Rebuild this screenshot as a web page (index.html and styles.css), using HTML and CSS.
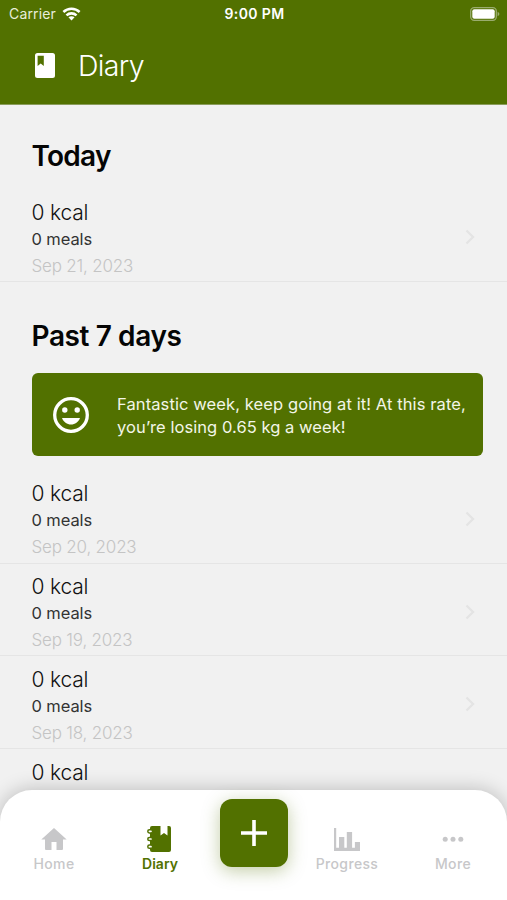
FILE: index.html
```html
<!DOCTYPE html>
<html lang="en">
<head>
<meta charset="utf-8">
<title>Diary</title>
<link rel="stylesheet" href="styles.css">
</head>
<body>
<div class="screen">
  <header class="header">
    <div class="status">
      <div class="carrier"><span class="carrier-name">Carrier</span>
        <svg class="wifi" viewBox="0 0 20 15"><g fill="none" stroke="#fff" stroke-width="2.7"><path d="M1.3 5.4C6.2.8 13.8.8 18.7 5.4"/><path d="M4.6 9C7.7 6.1 12.3 6.1 15.4 9"/></g><path fill="#fff" d="M6.7 11.1c1.9-1.7 4.7-1.7 6.6 0L10 14.4z"/></svg>
      </div>
      <span class="time">9:00 PM</span>
      <svg class="battery" viewBox="0 0 30 14"><rect x=".7" y=".7" width="25.6" height="12.6" rx="3.5" fill="none" stroke="#9aac6e" stroke-width="1.3"/><rect x="2.3" y="2.3" width="22.4" height="9.4" rx="2" fill="#fff"/><path d="M27.6 4.8q1.8 1 1.8 2.2t-1.8 2.2z" fill="#9aac6e"/></svg>
    </div>
    <div class="title-bar">
      <svg class="book" viewBox="0 0 20 25"><path fill="#fff" fill-rule="evenodd" d="M2.5 0h15A2.5 2.5 0 0 1 20 2.5v20a2.5 2.5 0 0 1-2.5 2.5h-15A2.5 2.5 0 0 1 0 22.5v-20A2.5 2.5 0 0 1 2.5 0zM2.600 2.700v10.200l3.100-2.300 3.100 2.300V2.700z"/></svg>
      <h1>Diary</h1>
    </div>
  </header>
  <main class="content">
    <h2 class="today">Today</h2>
    <article class="row"><div><p class="kcal">0 kcal</p><p class="meals">0 meals</p><p class="date">Sep 21, 2023</p></div><svg class="chevron" viewBox="0 0 10 16"><path d="M1.500 1.500 8 8l-6.500 6.500"/></svg></article>
    <h2 class="past">Past 7 days</h2>
    <section class="banner">
      <svg class="smile" viewBox="0 0 36 36"><circle cx="18" cy="18" r="16.300" fill="none" stroke="#fff" stroke-width="3.300"/><circle cx="11.800" cy="13" r="2.700" fill="#fff"/><circle cx="24.200" cy="13" r="2.700" fill="#fff"/><path fill="#fff" d="M9 21h18c-1.500 4-5 6.500-9 6.500S10.500 25 9 21z"/></svg>
      <p><span class="line first">Fantastic week, keep going at it! At this rate,</span> <span class="line second">you’re losing 0.65 kg a week!</span></p>
    </section>
    <article class="row"><div><p class="kcal">0 kcal</p><p class="meals">0 meals</p><p class="date">Sep 20, 2023</p></div><svg class="chevron" viewBox="0 0 10 16"><path d="M1.500 1.500 8 8l-6.500 6.500"/></svg></article>
    <article class="row"><div><p class="kcal">0 kcal</p><p class="meals">0 meals</p><p class="date">Sep 19, 2023</p></div><svg class="chevron" viewBox="0 0 10 16"><path d="M1.500 1.500 8 8l-6.500 6.500"/></svg></article>
    <article class="row"><div><p class="kcal">0 kcal</p><p class="meals">0 meals</p><p class="date">Sep 18, 2023</p></div><svg class="chevron" viewBox="0 0 10 16"><path d="M1.500 1.500 8 8l-6.500 6.500"/></svg></article>
    <article class="row"><div><p class="kcal">0 kcal</p></div></article>
  </main>
  <nav class="tabs">
    <a class="tab"><svg viewBox="0 0 26 26"><path d="M13 2 .3 13.500H4V23q0 1 1 1h5.500v-8h5v8H21q1 0 1-1v-9.500h3.700z"/></svg><span>Home</span></a>
    <a class="tab active"><svg viewBox="0 0 26 26"><path d="M5 0h8.500v9.500l3.500-2.500 3.500 2.500V0H22a2 2 0 0 1 2 2v22a2 2 0 0 1-2 2H5a2 2 0 0 1-2-2V2a2 2 0 0 1 2-2z"/><g fill="#fff" stroke="#527100" stroke-width="1.500"><rect x=".8" y="3.700" width="4.800" height="3.200" rx="1.600"/><rect x=".8" y="11.400" width="4.800" height="3.200" rx="1.600"/><rect x=".8" y="19.100" width="4.800" height="3.200" rx="1.600"/></g></svg><span>Diary</span></a>
    <button class="add" aria-label="Add"><svg viewBox="0 0 26 26"><path d="M13 0v26M0 13h26"/></svg></button>
    <a class="tab progress"><svg viewBox="0 0 26 26"><path d="M0 2h2.200v19.800H5V11h5.300v10.800h2.500V6h5.300v15.800h2.800V16H26v9H0z"/></svg><span>Progress</span></a>
    <a class="tab"><svg viewBox="0 0 26 26"><circle cx="5.200" cy="13.300" r="2.500"/><circle cx="13" cy="13.300" r="2.500"/><circle cx="20.800" cy="13.300" r="2.500"/></svg><span>More</span></a>
  </nav>
</div>
</body>
</html>
```
FILE: styles.css
```css
* { box-sizing: border-box; }
body { margin: 0; font-family: Inter, sans-serif; background: #f1f1f1; }
h1, h2, p { margin: 0; }
svg { display: block; flex: none; }
.screen { position: relative; width: 507px; height: 900px; overflow: hidden; }

.header { height: 105px; background: #527100; color: #fff; border-bottom: 1px solid #8a9c5b; }
.status { display: grid; grid-template-columns: 1fr auto 1fr; align-items: center; height: 27px; padding: 0 7px 0 9px; }
.carrier { display: flex; align-items: center; gap: 6px; font-size: 14px; letter-spacing: 0.15px; color: #e8edda; }
.wifi { width: 19px; height: 14px; }
.time { font-size: 14px; font-weight: 600; letter-spacing: 0.4px; }
.battery { width: 30px; height: 14px; justify-self: end; }
.title-bar { display: flex; align-items: center; gap: 23px; height: 76px; padding-left: 35px; }
.book { width: 20px; height: 25px; }
h1 { padding-top: 1px; font-size: 28.5px; font-weight: 300; letter-spacing: -0.7px; line-height: 36px; }

h2 { padding-left: 31.500px; font-size: 28px; font-weight: 600; line-height: 36px; color: #050505; letter-spacing: -0.75px; }
.today { margin: 33px 0 15px; }
.past { margin: 36.500px 0 18.500px; letter-spacing: -0.4px; }
.row { display: flex; justify-content: space-between; align-items: flex-start; height: 92.800px; padding: 9.500px 32px 0 31.500px; border-bottom: 1px solid #e5e5e5; }
.row p { line-height: 27px; white-space: nowrap; }
.kcal { font-size: 21px; font-weight: 300; color: #111; letter-spacing: -0.2px; }
.meals { font-size: 16.500px; color: #333; letter-spacing: -0.1px; }
.date { font-size: 17px; font-weight: 300; color: #c4c4c4; letter-spacing: -0.2px; }
.chevron { width: 10px; height: 16px; margin-top: 30.500px; fill: none; stroke: #e4e4e4; stroke-width: 2.300; }

.banner { display: flex; align-items: center; gap: 28px; height: 83px; margin: 0 24.500px 15px 31.500px; padding: 1.500px 0 0 21.500px; background: #527100; border-radius: 6px; color: #f3f6e8; font-size: 16.500px; line-height: 23px; }
.banner p { padding-top: 1px; }
.smile { width: 36px; height: 36px; }
.line { display: block; white-space: nowrap; }
.first { letter-spacing: 0.1px; }
.second { letter-spacing: 0.06px; }

.tabs { position: absolute; left: 0; right: 0; bottom: 0; height: 110px; display: flex; justify-content: center; align-items: flex-start; background: #fff; border-radius: 32px 32px 0 0; box-shadow: 0 0 20px rgba(0, 0, 0, 0.24); }
.tab { display: flex; flex-direction: column; align-items: center; width: 106px; padding-top: 36px; font-size: 14px; font-weight: 500; line-height: 18px; color: #c7c7c9; gap: 3px; letter-spacing: 0.35px; }
.tab svg { width: 26px; height: 26px; fill: currentColor; }
.active { color: #527100; font-weight: 600; letter-spacing: 0; }
.add { display: flex; justify-content: center; align-items: center; width: 68px; height: 68px; margin: 9px 6.500px 0 6.500px; padding: 0; border: 0; border-radius: 12px; background: #527100; box-shadow: 0 4px 18px rgba(82, 113, 0, 0.35); }
.add svg { width: 26px; height: 26px; stroke: #fff; stroke-width: 3.600; }
```
